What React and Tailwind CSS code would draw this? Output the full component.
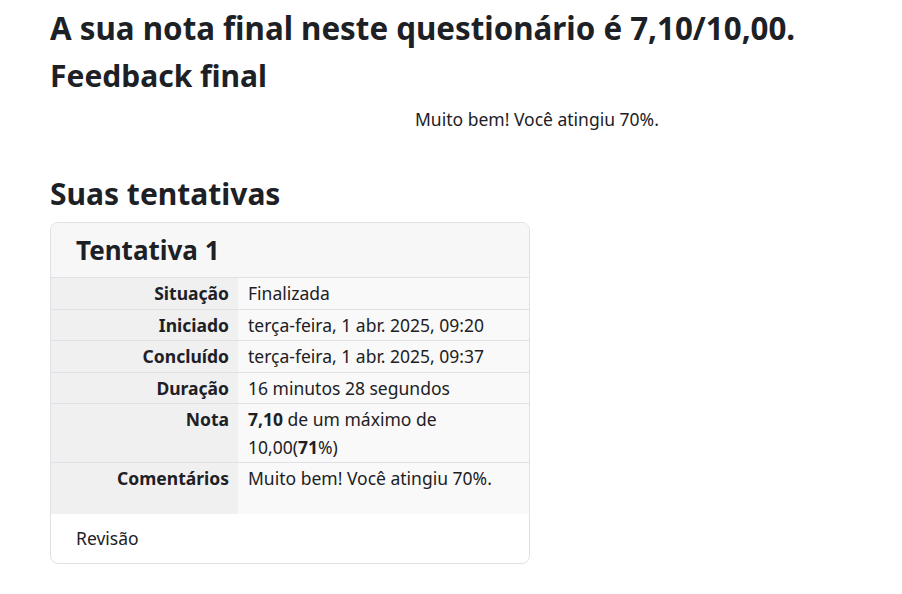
const rows = [
  { label: "Situação", value: "Finalizada" },
  { label: "Iniciado", value: "terça-feira, 1 abr. 2025, 09:20" },
  { label: "Concluído", value: "terça-feira, 1 abr. 2025, 09:37" },
  { label: "Duração", value: "16 minutos 28 segundos" },
  {
    label: "Nota",
    value: (
      <>
        <b>7,10</b> de um máximo de 10,00(<b>71</b>%)
      </>
    ),
  },
  { label: "Comentários", value: "Muito bem! Você atingiu 70%.", tall: true },
];

export default function App() {
  return (
    <div
      className="min-h-[594px] bg-white px-[50px] pt-[10px] text-[#1d2125] text-[17.5px]"
      style={{ fontFamily: "'Noto Sans', sans-serif" }}
    >
      {/* NOTA */}
      <h2 className="text-[31.3px] font-bold leading-[36px]">
        A sua nota final neste questionário é 7,10/10,00.
      </h2>
      <h2 className="mt-[12px] text-[30px] font-bold leading-[36px]">Feedback final</h2>
      <p className="mt-[11px] pl-[365px] leading-[28px]">Muito bem! Você atingiu 70%.</p>

      {/* TENTATIVAS */}
      <h3 className="mt-[43px] text-[30px] font-bold leading-[36px]">Suas tentativas</h3>
      <div className="mt-[10px] w-[480px] rounded-lg border border-[#dee2e6] overflow-hidden">
        <div className="bg-[#f7f7f7] border-b border-[#dee2e6] px-[25px] h-[55px] flex items-center">
          <h4 className="text-[26px] font-bold">Tentativa 1</h4>
        </div>
        <table className="w-full border-collapse">
          <tbody>
            {rows.map((r, i) => (
              <tr key={r.label} className={i > 0 ? "border-t border-[#dee2e6]" : ""}>
                <th
                  className={`w-[187px] bg-[#f0f0f0] text-right font-bold align-top pl-[9px] pr-[9px] pt-[2px] leading-[27.5px] ${
                    r.tall ? "pb-[21px]" : "pb-[1px]"
                  }`}
                >
                  {r.label}
                </th>
                <td className="bg-[#f9f9f9] align-top font-normal pl-[10px] pr-[8px] pt-[2px] pb-[1px] leading-[27.5px]">
                  {r.value}
                </td>
              </tr>
            ))}
          </tbody>
        </table>
        <div className="px-[25px] h-[49px] flex items-center">Revisão</div>
      </div>
    </div>
  );
}
